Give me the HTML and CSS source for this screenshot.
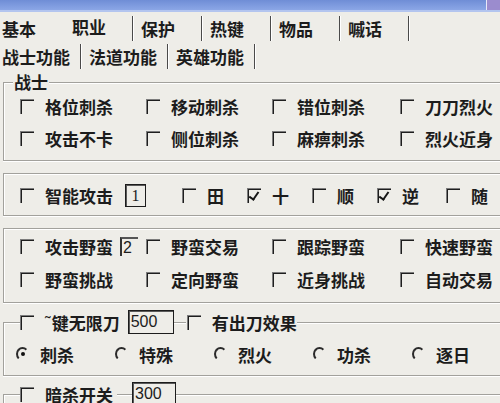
FILE: index.html
```html
<!DOCTYPE html>
<html lang="zh-CN">
<head>
<meta charset="utf-8">
<title>职业 - 战士功能</title>
<link rel="stylesheet" href="styles.css">
</head>
<body>
<div class="win">
  <div class="titlebar"><span class="tb-btn"></span></div>

  <nav class="tabs tabs-main">
    <span class="tab">基本</span>
    <span class="tab tab-active">职业</span>
    <span class="sep"></span>
    <span class="tab">保护</span>
    <span class="sep"></span>
    <span class="tab">热键</span>
    <span class="sep"></span>
    <span class="tab">物品</span>
    <span class="sep"></span>
    <span class="tab">嘁话</span>
    <span class="sep"></span>
  </nav>

  <nav class="tabs tabs-sub">
    <span class="tab">战士功能</span>
    <span class="sep"></span>
    <span class="tab">法道功能</span>
    <span class="sep"></span>
    <span class="tab">英雄功能</span>
    <span class="sep"></span>
  </nav>

  <fieldset class="group g-warrior">
    <legend class="lg lg-text">战士</legend>
    <div class="grid4 rows32">
      <label class="opt"><span class="cb"></span>格位刺杀</label>
      <label class="opt"><span class="cb"></span>移动刺杀</label>
      <label class="opt"><span class="cb"></span>错位刺杀</label>
      <label class="opt"><span class="cb"></span>刀刀烈火</label>
      <label class="opt"><span class="cb"></span>攻击不卡</label>
      <label class="opt"><span class="cb"></span>侧位刺杀</label>
      <label class="opt"><span class="cb"></span>麻痹刺杀</label>
      <label class="opt"><span class="cb"></span>烈火近身</label>
    </div>
  </fieldset>

  <fieldset class="group g-smart">
    <div class="smart-row">
      <label class="opt"><span class="cb"></span>智能攻击</label>
      <span class="num num-1">1</span>
      <label class="opt opt-tian"><span class="cb"></span>田</label>
      <label class="opt"><span class="cb on"></span>十</label>
      <label class="opt"><span class="cb"></span>顺</label>
      <label class="opt"><span class="cb on"></span>逆</label>
      <label class="opt opt-sui"><span class="cb"></span>随</label>
    </div>
  </fieldset>

  <fieldset class="group g-savage">
    <div class="grid4 rows33">
      <label class="opt"><span class="cb"></span>攻击野蛮<span class="mini">2</span></label>
      <label class="opt"><span class="cb"></span>野蛮交易</label>
      <label class="opt"><span class="cb"></span>跟踪野蛮</label>
      <label class="opt"><span class="cb"></span>快速野蛮</label>
      <label class="opt"><span class="cb"></span>野蛮挑战</label>
      <label class="opt"><span class="cb"></span>定向野蛮</label>
      <label class="opt"><span class="cb"></span>近身挑战</label>
      <label class="opt"><span class="cb"></span>自动交易</label>
    </div>
  </fieldset>

  <fieldset class="group g-blade">
    <legend class="lg lg-row">
      <label class="opt"><span class="cb"></span><span class="tilde">˜</span>键无限刀</label>
      <span class="num num-500">500</span>
      <span class="seg seg-a"></span>
      <label class="opt"><span class="cb"></span>有出刀效果</label>
    </legend>
    <div class="radio-row">
      <label class="ropt"><span class="rb on"></span>刺杀</label>
      <label class="ropt"><span class="rb"></span>特殊</label>
      <label class="ropt"><span class="rb"></span>烈火</label>
      <label class="ropt"><span class="rb"></span>功杀</label>
      <label class="ropt"><span class="rb"></span>逐日</label>
    </div>
  </fieldset>

  <fieldset class="group g-assassin">
    <legend class="lg lg-row">
      <label class="opt"><span class="cb"></span>暗杀开关</label>
      <span class="seg seg-b"></span>
      <span class="num num-300">300</span>
    </legend>
  </fieldset>
</div>
</body>
</html>
```

FILE: styles.css
```css
html, body {
  margin: 0;
  padding: 0;
}

body {
  background: #eeede8;
  font-family: "Noto Sans CJK SC", "Noto Sans", sans-serif;
  font-size: 17px;
  font-weight: 700;
  color: #1c1c1c;
}

.win {
  width: 500px;
  height: 403px;
  overflow: hidden;
  background: #eeede8;
}

/* title strip */
.titlebar {
  height: 10px;
  background: linear-gradient(#6f8dd6, #8ba6e6);
  border-bottom: 2px solid #b3c5ef;
  display: flex;
  justify-content: flex-end;
}

.tb-btn {
  width: 13px;
  height: 10px;
  background: #9b8cce;
  border-left: 1px solid #e8e8f8;
}

/* tab strips */
.tabs {
  display: flex;
  align-items: center;
  padding-left: 2px;
}

.tab {
  line-height: 17px;
  white-space: nowrap;
}

.sep {
  width: 1px;
  height: 25px;
  background: #4a4a4a;
  border-right: 1px solid #ffffff;
}

.tabs-main {
  height: 32px;
}

.tabs-main .sep {
  margin: 0 7px 0 26px;
}

.tab-active {
  margin-left: 36px;
  margin-bottom: 4px;
}

.tabs-sub {
  height: 24px;
}

.tabs-sub .sep {
  margin: 0 7px 0 10px;
}

/* group boxes */
.group {
  margin: 0 0 0 3px;
  padding: 0;
  min-width: 0;
  border: 1px solid #a2a19c;
  border-right: none;
  box-shadow: inset 1px 1px 0 #ffffff, 0 1px 0 #ffffff;
}

.lg {
  background: #eeede8;
  padding: 0;
}

.lg-text {
  margin-left: 9px;
  padding: 0 1px;
  line-height: 16px;
  height: 16px;
}

.lg-row {
  margin-left: 16px;
  height: 24px;
  display: flex;
  align-items: center;
}

.g-warrior {
  margin-top: 6px;
  padding-bottom: 6px;
}

.g-smart {
  margin-top: 12px;
  padding: 6px 0 5px;
}

.g-savage {
  margin-top: 12px;
  padding: 1px 0 6px;
}

.g-blade {
  margin-top: 7px;
  padding: 5px 0 6px;
}

.g-assassin {
  margin-top: 6px;
  height: 40px;
}

.grid4 {
  display: grid;
  grid-template-columns: 126px 126px 128px auto;
  align-items: center;
  padding-left: 16px;
}

.rows32 {
  grid-auto-rows: 32px;
}

.rows33 {
  grid-auto-rows: 33px;
}

/* options */
.opt {
  display: flex;
  align-items: center;
  white-space: nowrap;
  line-height: 17px;
}

.cb {
  position: relative;
  flex: none;
  box-sizing: border-box;
  width: 14px;
  height: 15px;
  margin-right: 11px;
  border-top: 1px solid #7c7c7c;
  border-left: 1px solid #7c7c7c;
  box-shadow: inset 1px 1px 0 #1e1e1e;
}

.cb.on::after {
  content: "";
  position: absolute;
  left: 3px;
  top: 1px;
  width: 4px;
  height: 8px;
  border-right: 2px solid #151515;
  border-bottom: 2px solid #151515;
  transform: rotate(35deg);
}

.tilde {
  font-family: "Liberation Sans", sans-serif;
  font-size: 17px;
  font-weight: normal;
  margin-right: 1px;
}

.mini {
  box-sizing: border-box;
  width: 18px;
  height: 19px;
  margin-left: 7px;
  border-top: 2px solid #555;
  border-left: 2px solid #333;
  font-family: "Liberation Sans", sans-serif;
  font-size: 16px;
  font-weight: normal;
  line-height: 17px;
  padding-left: 1px;
}

.num {
  box-sizing: border-box;
  height: 24px;
  border: 1px solid #1c1c1c;
  box-shadow: inset 1px 1px 0 #5a5a5a;
  font-family: "Liberation Sans", sans-serif;
  font-size: 16px;
  line-height: 22px;
  padding-left: 2px;
  font-weight: normal;
}

/* smart attack row */
.smart-row {
  display: flex;
  align-items: center;
  gap: 23px;
  height: 30px;
  padding-left: 16px;
}

.num-1 {
  width: 21px;
  height: 23px;
  margin-left: -11px;
  margin-right: 13px;
  text-align: center;
  padding-left: 0;
  font-family: "Liberation Serif", serif;
}

.opt-sui {
  margin-left: 4px;
}

/* blade group */
.num-500 {
  width: 46px;
  margin-left: 8px;
}

.seg {
  height: 1px;
  background: #a2a19c;
  box-shadow: 0 1px 0 #ffffff;
}

.seg-a {
  width: 12px;
  margin-right: 1px;
}

.seg-b {
  width: 15px;
  margin-left: 4px;
}

.num-300 {
  width: 44px;
}

.radio-row {
  display: grid;
  grid-template-columns: repeat(5, 99px);
  align-items: center;
  height: 30px;
  padding-left: 12px;
}

.ropt {
  display: flex;
  align-items: center;
  white-space: nowrap;
  line-height: 17px;
}

.rb {
  position: relative;
  flex: none;
  box-sizing: border-box;
  width: 13px;
  height: 14px;
  margin-right: 11px;
  border-radius: 50%;
  border: 2px solid transparent;
  border-top-color: #2a2a2a;
  border-left-color: #2a2a2a;
}

.rb.on::after {
  content: "";
  position: absolute;
  left: 2.5px;
  top: 3px;
  width: 4px;
  height: 4px;
  border-radius: 50%;
  background: #111;
}
```
